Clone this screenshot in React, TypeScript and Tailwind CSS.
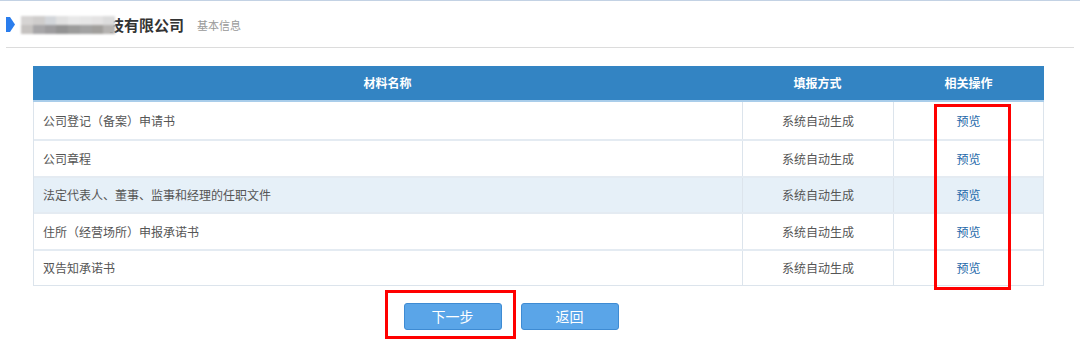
const rows = [
  { name: '公司登记（备案）申请书', hi: false, h: 'h-[37px]' },
  { name: '公司章程', hi: false, h: 'h-[37px]' },
  { name: '法定代表人、董事、监事和经理的任职文件', hi: true, h: 'h-[36px]' },
  { name: '住所（经营场所）申报承诺书', hi: false, h: 'h-[37px]' },
  { name: '双告知承诺书', hi: false, h: 'h-[36px]' },
];

const blurCells = [
  '#d6d4d3', '#cfcdcc', '#d3d6da', '#e1e1e1', '#e8e8e8', '#e6e6e6', '#e4e3e3', '#dcdcdc',
  '#c5c2c0', '#a7a6a8', '#9d9c9e', '#939393', '#9c9c9b', '#a2a2a2', '#a19f9c', '#b5b3b1',
];

export default function App() {
  return (
    <div className="relative w-[1080px] h-[345px] bg-white font-['Noto_Sans_CJK_SC','Microsoft_YaHei',sans-serif] overflow-hidden">
      <div className="h-px bg-[#c3d2e4]" />

      {/* title bar */}
      <div className="mx-[6px] h-[47px] flex items-center border-b border-[#dcdcdc]">
        <svg width="9" height="15" viewBox="0 0 9 15" className="mt-[1px] shrink-0">
          <path d="M0 0 H4 L9 7.5 L4 15 H0 Z" fill="#2a7ded" />
        </svg>
        <div className="relative z-10 ml-[6px] mt-[1px] w-[94px] h-[18px] grid grid-cols-8 blur-[1px]">
          {blurCells.map((c, i) => (
            <div key={i} style={{ background: c }} />
          ))}
        </div>
        <span className="-ml-[6px] mt-[2px] text-[15px] font-bold text-[#333]">技有限公司</span>
        <span className="ml-[13px] mt-[3px] text-[11px] text-[#999]">基本信息</span>
      </div>

      {/* table */}
      <div className="relative mt-[18px] ml-[33px] w-[1011px]">
        <div className="flex h-[36px] bg-[#3384c3] text-white text-[12px] font-bold border-b-2 border-[#a9cdea]">
          <div className="w-[709px] flex items-center justify-center">材料名称</div>
          <div className="w-[151px] flex items-center justify-center">填报方式</div>
          <div className="w-[151px] flex items-center justify-center">相关操作</div>
        </div>
        <div className="border-x border-b border-[#dce4ec]">
          {rows.map((r, i) => (
            <div
              key={i}
              className={`flex ${r.h} text-[12px] ${i > 0 ? 'border-t-2 border-[#e4ebf2]' : ''} ${r.hi ? 'bg-[#e6f0f8]' : 'bg-white'}`}
            >
              <div className="w-[708px] flex items-center pl-[9px] text-[#555]">{r.name}</div>
              <div className="w-[151px] flex items-center justify-center text-[#555] border-l border-[#dce4ec]">
                系统自动生成
              </div>
              <div className="flex-1 flex items-center justify-center text-[#2468a9] border-l border-[#dce4ec]">
                预览
              </div>
            </div>
          ))}
        </div>
        {/* annotation box */}
        <div className="absolute left-[901px] top-[38px] w-[77px] h-[186px] border-[3px] border-[#ff0000]" />
      </div>

      {/* buttons */}
      <div className="relative mt-[17px] flex justify-center gap-[19px] pr-[58px]">
        <button className="w-[98px] h-[27px] rounded-[3px] bg-[#5aa5e8] border border-[#3e8bd3] text-white text-[14px]">
          下一步
        </button>
        <button className="w-[98px] h-[27px] rounded-[3px] bg-[#5aa5e8] border border-[#3e8bd3] text-white text-[14px]">
          返回
        </button>
        <div className="absolute left-[385px] top-[-13px] w-[131px] h-[49px] border-[3px] border-[#ff0000]" />
      </div>
    </div>
  );
}
